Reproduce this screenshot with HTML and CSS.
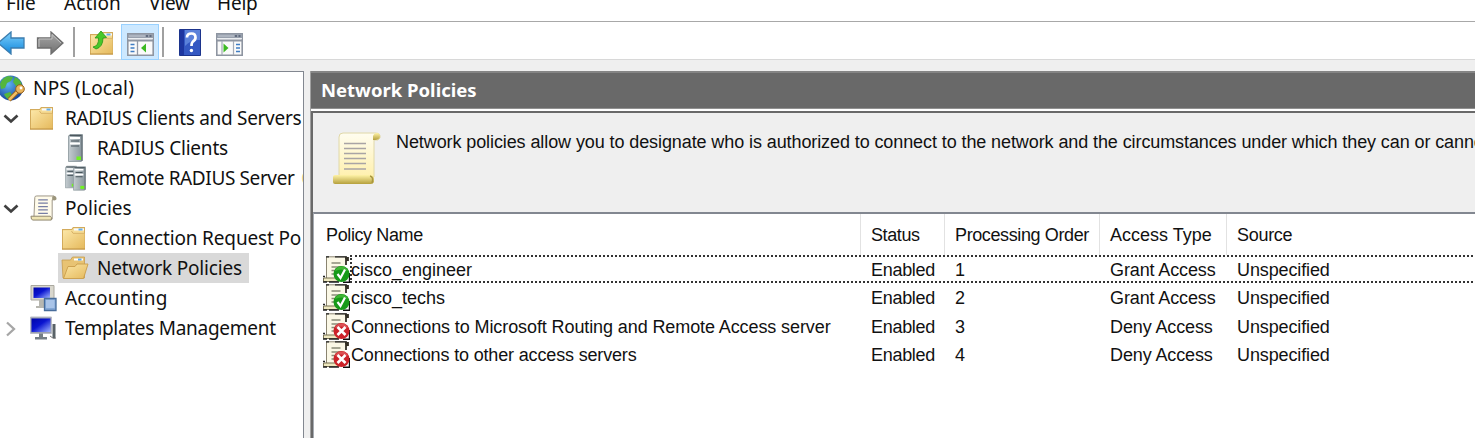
FILE: index.html
```
<!DOCTYPE html>
<html lang="en">
<head>
<meta charset="utf-8">
<title>Network Policy Server</title>
<link rel="stylesheet" href="styles.css">
</head>
<body>
<svg class="defs" width="0" height="0">
  <defs>
    <linearGradient id="gFolder" x1="0" y1="0" x2="1" y2="1"><stop offset="0" stop-color="#fbe6a6"/><stop offset="1" stop-color="#e5b95c"/></linearGradient>
    <linearGradient id="gBlue" x1="0" y1="0" x2="0" y2="1"><stop offset="0" stop-color="#7fd0fb"/><stop offset="1" stop-color="#0f86dc"/></linearGradient>
    <linearGradient id="gGrey" x1="0" y1="0" x2="0" y2="1"><stop offset="0" stop-color="#a8a8a8"/><stop offset="1" stop-color="#707070"/></linearGradient>
    <linearGradient id="gScreen" x1="0" y1="0" x2="1" y2="1"><stop offset="0" stop-color="#0005a8"/><stop offset=".45" stop-color="#0a14d0"/><stop offset="1" stop-color="#9fb4ff"/></linearGradient>
    <linearGradient id="gServer" x1="0" y1="0" x2="1" y2="0"><stop offset="0" stop-color="#c4ccd0"/><stop offset="1" stop-color="#87949b"/></linearGradient>
    <linearGradient id="gPaper" x1="0" y1="0" x2="0" y2="1"><stop offset="0" stop-color="#fffdf0"/><stop offset="1" stop-color="#fff0ae"/></linearGradient>
    <linearGradient id="gRoll" x1="0" y1="0" x2="0" y2="1"><stop offset="0" stop-color="#fff3a8"/><stop offset="1" stop-color="#b5a03c"/></linearGradient>
    <radialGradient id="gGlobe" cx=".4" cy=".35" r=".7"><stop offset="0" stop-color="#5fb4f4"/><stop offset="1" stop-color="#123f94"/></radialGradient>
    <symbol id="folder" viewBox="0 0 26 26">
      <path d="M1 4h9.500l1.500-2h12v22.500H1z" fill="#d3ab5c"/>
      <path d="M2 5h9l1.500-2H23v20.500H2z" fill="#f6dc95"/>
      <path d="M13 3.500h10v2H13z" fill="#f8fbff"/><path d="M17.500 3.500h4v2h-4z" fill="#68aee8"/>
      <path d="M2 6h8.500l1 2.500h12V24H2z" fill="url(#gFolder)"/>
      <path d="M10.500 6l1.500 2.300h11.500" fill="none" stroke="#d9b266"/>
      <path d="M1 24h23" stroke="#bf9141"/>
    </symbol>
    <symbol id="folder-open" viewBox="0 0 28 26">
      <path d="M1 5h8.500l2-3H23.500v21H2z" fill="#e8c373" stroke="#c79c4d" stroke-width=".8"/>
      <path d="M13 3.500h9v2h-9z" fill="#fff"/><path d="M17 3.500h3.500v2H17z" fill="#62a9e6"/>
      <path d="M2.500 23.500 7 11.500h7l2-2.500h11L22.500 23.500z" fill="url(#gFolder)" stroke="#c99d4b" stroke-width=".9"/>
    </symbol>
    <symbol id="server" viewBox="0 0 15 28">
      <path d="M.5 2 2 .5h12.500v26L13 27.500H.500z" fill="url(#gServer)" stroke="#89959b" stroke-width=".8"/>
      <path d="M13.800 1v26" stroke="#6c777d" stroke-width="1.200"/><path d="M1.500 1.500h12" stroke="#4c575d" stroke-width="1.300"/>
      <path d="M2 4h10M2 9.500h10" stroke="#fff" stroke-width="1.800"/><path d="M3 7h8M3 12h8" stroke="#46535a" stroke-width="1.200"/>
      <path d="M8.500 22.500h4.500v3.500H8.500z" fill="#70f320"/>
    </symbol>
    <symbol id="scroll" viewBox="0 0 28 28">
      <path d="M5 2.500Q5 1 7 1h18q2 1 1 4h-3v20H4z" fill="#fffbea" stroke="#999282"/>
      <path d="M23 5V2q0-1 2-1t2.500 2-1.500 2.500z" fill="#9b957c"/>
      <path d="M1 22h20q2 1 1 4H3q-2 0-2-4z" fill="#efe5b4" stroke="#8d836a"/>
      <path d="M8.500 5h10M8.500 8.500h10M8.500 12h10M8.500 15.500h10M8.500 19h10" stroke="#777ea4" stroke-width="1.300"/>
    </symbol>
    <symbol id="console" viewBox="0 0 27 23">
      <path d="M.8.800h25.400v21.400H.800z" fill="#fafafa" stroke="#8e95a1" stroke-width="1.600"/>
      <path d="M1 1h25v4H1z" fill="#98a0ad"/><path d="M2 3h16" stroke="#c3c9d3"/><path d="M19 3h2M22.500 3h2" stroke="#4f5a70" stroke-width="1.500"/>
      <path d="M1 5.700h25" stroke="#e9ecf0" stroke-width="1.200"/><path d="M1 7.500h25" stroke="#8e95a1" stroke-width="2"/>
    </symbol>
    <symbol id="policy" viewBox="0 0 27 27">
      <path d="M3.500 1H24q2 1 2 4l-4 2v18H4z" fill="#fbf8e6"/>
      <path d="M3.500 22V.8H23" fill="none" stroke="#8a8470"/>
      <path d="M3 .8h3M12 .8h12" stroke="#222" stroke-width="1.200"/>
      <path d="M22 2h3v2h-2v5" fill="none" stroke="#333026" stroke-width="1.800"/>
      <path d="M8.500 7h9M8.500 11h10M8.500 14.500h6M8.500 18h5" stroke="#8a8b78" stroke-width="1.300"/>
      <path d="M.5 22h15v3.500H.500z" fill="#eee8bf" stroke="#777052"/><path d="M0 20.500h2M0 26h4M6 26h10" stroke="#222" stroke-width="1.300"/>
      <path d="M20 26.200h6.500V17" fill="none" stroke="#111" stroke-width="1.400"/>
    </symbol>
    <symbol id="grant" viewBox="0 0 27 27">
      <use href="#policy" width="27" height="27"/><circle cx="18.500" cy="18" r="8" fill="#169a18"/><path d="M12 15a7 7 0 0 1 13 0q-7-3-13 0" fill="#3fb534"/>
      <path d="m14.500 18 3 4 4.500-8.500" fill="none" stroke="#fff" stroke-width="2.200"/>
    </symbol>
    <symbol id="deny" viewBox="0 0 27 27">
      <use href="#policy" width="27" height="27"/><circle cx="18.500" cy="18" r="8" fill="#cc2229"/><path d="M12 15a7 7 0 0 1 13 0q-7-3-13 0" fill="#dc5054"/>
      <path d="m14.500 14 8 8m0-8-8 8" stroke="#fff" stroke-width="2.600"/>
    </symbol>
  </defs>
</svg>
<div class="window">
  <nav class="menu"><span class="m1">File</span><span class="m2">Action</span><span class="m3">View</span><span class="m4">Help</span></nav>
  <div class="toolbar">
    <svg class="back" width="25" height="24" viewBox="0 0 25 24"><path d="M-2 12 11 1v6h13v10H11v6z" fill="url(#gBlue)" stroke="#3b7cae" stroke-width="1.300"/></svg>
    <svg class="forward" width="28" height="24" viewBox="0 0 28 24"><path d="M27 12 15 1v6H1.500v10H15v6z" fill="url(#gGrey)" stroke="#6e6e6e" stroke-width="1.300"/><path d="M25 12 16 3.500V8H3v8" fill="none" stroke="#c2c2c2"/></svg>
    <i class="sep"></i>
    <svg class="up" width="26" height="26" viewBox="0 0 26 26"><use href="#folder" width="26" height="26"/><path d="M4 17q6-1 5.500-9H6l6-7 5.500 6.500-3.500.5q0 9-7 11z" fill="#48c82a" stroke="#279517" stroke-width=".8"/></svg>
    <span class="pressed"><svg width="27" height="23" viewBox="0 0 27 23"><use href="#console" width="27" height="23"/><path d="M10.500 8v14" stroke="#9299a7" stroke-width="1.300"/><path d="M3.500 11.500h4M3.500 15h4M3.500 18.500h4" stroke="#3f7dc4" stroke-width="1.700"/><path d="M19 10.500v9L14 15z" fill="#3cba22"/></svg></span>
    <i class="sep sep2"></i>
    <svg class="help" width="22" height="27" viewBox="0 0 22 27"><path d="M.5.500h21v26H.500z" fill="#3458c2" stroke="#1c348c"/><path d="M1 1h4v25H1z" fill="#1d36a0"/><path d="M6 1h15v10Q12 10 6 17z" fill="#5b82da"/><path d="M8 8.500q0-4 4.500-4 4 0 4 4 0 2.500-2.500 4-1.500 1-1.500 4.500" fill="none" stroke="#fff" stroke-width="2.700"/><circle cx="12.400" cy="21.500" r="1.700" fill="#fff"/></svg>
    <svg class="action" width="27" height="23" viewBox="0 0 27 23"><use href="#console" width="27" height="23"/><path d="M17.500 8v14M6 8v14" stroke="#a5abb7" stroke-width="1.200"/><path d="M20 11.500h4M20 15h4M20 18.500h4" stroke="#3f7dc4" stroke-width="1.700"/><path d="M7.500 10.500v9l5-4.500z" fill="#3cba22"/></svg>
  </div>
  <main class="main">
    <aside class="tree">
      <div class="node root"><svg width="25" height="28" viewBox="0 0 25 28"><circle cx="10.500" cy="14" r="12.500" fill="url(#gGlobe)"/><path d="M0 10Q2 4 8 2l5 1-2 4-4 2-2 5-4 1zM15 3q7 3 7 10l-6-1-3-4zM4 20l6-2 3 4-3 4q-4-1-6-6" fill="#54b63e"/><path d="m9 26 9-9" stroke="#97601b" stroke-width="4.500"/><path d="m9 26 9-9" stroke="#f0bd62" stroke-width="2.500"/><circle cx="20" cy="15" r="4.300" fill="#eab55c" stroke="#97601b"/><circle cx="21" cy="14" r="1.400" fill="#fff"/></svg><span class="t1">NPS (Local)</span></div>
      <div class="node l1"><svg class="chev" width="16" height="10" viewBox="0 0 16 10"><path d="m1.500 1.500 6.500 6 6.500-6" fill="none" stroke="#404040" stroke-width="2.700"/></svg><svg class="ic folder" width="26" height="26"><use href="#folder"/></svg><span class="t2">RADIUS Clients and Servers</span></div>
      <div class="node l2"><svg class="one" width="15" height="28"><use href="#server"/></svg><span class="t3">RADIUS Clients</span></div>
      <div class="node l2"><svg class="two" width="22" height="26" viewBox="0 0 22 26"><use href="#server" width="12" height="24"/><use href="#server" x="8" y="1" width="13" height="25"/></svg><span class="t4">Remote RADIUS Server <span class="next">G</span></span></div>
      <div class="node l1"><svg class="chev" width="16" height="10" viewBox="0 0 16 10"><path d="m1.500 1.500 6.500 6 6.500-6" fill="none" stroke="#404040" stroke-width="2.700"/></svg><svg class="ic" width="27" height="27"><use href="#scroll"/></svg><span class="t5">Policies</span></div>
      <div class="node l2"><svg class="fo folder" width="26" height="26"><use href="#folder"/></svg><span class="t6">Connection Request Po</span></div>
      <div class="node l2 selected"><svg class="fo" width="28" height="26"><use href="#folder-open"/></svg><span class="t7">Network Policies</span></div>
      <div class="node l1"><i class="chev"></i><svg class="ic" width="27" height="28" viewBox="0 0 27 28"><path d="M1 1.500h23V16H1z" fill="#d9d7cd" stroke="#aaa89f"/><path d="M3.500 3.500H20V14H3.500z" fill="url(#gScreen)"/><path d="M9 16h6v4h3v4H6v-2h3z" fill="#b7b7b0"/><path d="M14.500 14.500H26V26.500H14.500z" fill="#84a8d6" stroke="#486d9b" stroke-width="1.300"/><path d="M16 16h8.500v8H16z" fill="#a9c4e8"/></svg><span class="t8">Accounting</span></div>
      <div class="node l1"><svg class="chev right" width="16" height="16" viewBox="0 0 16 16"><path d="m4 1.500 7 6.500-7 6.500" fill="none" stroke="#a6a6a6" stroke-width="2.300"/></svg><svg class="ic" width="27" height="25" viewBox="0 0 27 25"><path d="M.5 1h21v16.500H.500z" fill="#9aa0ae" stroke="#b9bcc7"/><path d="M1.500 2.500h19v13.500h-19z" fill="url(#gScreen)"/><path d="M9 17.500h4V21h4v2.500H5V21h4z" fill="#747e85"/><path d="M22.500 8h3v14h-3z" fill="#596267"/><path d="M20 20q4 4 6 2" fill="none" stroke="#777"/></svg><span class="t9">Templates Management</span></div>
    </aside>
    <section class="pane">
      <h1><span>Network Policies</span></h1>
      <div class="body">
        <div class="intro">
          <svg width="50" height="53" viewBox="0 0 50 53"><path d="M7 5q0-4 4-4h32q6 0 5 5-1 3-6 2v37H7z" fill="url(#gPaper)" stroke="#e0d8a8"/><path d="M41 8V4q1-3 4-3t3 4q-1 3-5 3z" fill="url(#gRoll)"/><path d="M1 45q0-2 2-2h36q3 0 3 3v4q-1 2-3 2H3q-2 0-2-2z" fill="url(#gRoll)"/><path d="M38 44q4 1 2 7" fill="none" stroke="#a89640" stroke-width="1.500"/><path d="M12 11.500h22M12 16.500h22M12 21.500h22M12 26.500h22M12 31.500h22M12 37h22" stroke="#a9a4a5" stroke-width="1.500"/></svg>
          <p>Network policies allow you to designate who is authorized to connect to the network and the circumstances under which they can or cannot</p>
        </div>
        <div class="list">
          <div class="row head"><span class="c-name"><b class="h1">Policy Name</b></span><span><b class="h2">Status</b></span><span><b class="h3">Processing Order</b></span><span><b class="h4">Access Type</b></span><span><b class="h5">Source</b></span></div>
          <div class="row focus"><span class="name"><svg width="27" height="27"><use href="#grant"/></svg><b class="n1">cisco_engineer</b></span><span><b class="st">Enabled</b></span><span><b>1</b></span><span><b class="ac">Grant Access</b></span><span><b class="un">Unspecified</b></span></div>
          <div class="row"><span class="name"><svg width="27" height="27"><use href="#grant"/></svg><b class="n2">cisco_techs</b></span><span><b class="st">Enabled</b></span><span><b>2</b></span><span><b class="ac">Grant Access</b></span><span><b class="un">Unspecified</b></span></div>
          <div class="row"><span class="name"><svg width="27" height="27"><use href="#deny"/></svg><b class="n3">Connections to Microsoft Routing and Remote Access server</b></span><span><b class="st">Enabled</b></span><span><b>3</b></span><span><b class="ac">Deny Access</b></span><span><b class="un">Unspecified</b></span></div>
          <div class="row"><span class="name"><svg width="27" height="27"><use href="#deny"/></svg><b class="n4">Connections to other access servers</b></span><span><b class="st">Enabled</b></span><span><b>4</b></span><span><b class="ac">Deny Access</b></span><span><b class="un">Unspecified</b></span></div>
        </div>
      </div>
    </section>
  </main>
</div>
</body>
</html>
```
FILE: styles.css
```
* { box-sizing: border-box; }
body { margin: 0; width: 1475px; height: 438px; overflow: hidden; background: #efefef; color: #111; }
svg { display: block; flex: none; }
.defs { position: absolute; }
.window { display: flex; flex-direction: column; height: 438px; white-space: nowrap; font: 19px/30px "Noto Sans", "Open Sans", sans-serif; }
.menu { display: flex; height: 22px; background: #fff; border-bottom: 1px solid #a8a8a8; overflow: hidden; line-height: 28px; padding-left: 6px; flex: none; letter-spacing: -.2px; }
.menu span { flex: none; margin-top: -11px; }
.m1 { width: 58px; } .m2 { width: 85px; letter-spacing: 0.1px; } .m3 { width: 68px; }
.toolbar { display: flex; height: 38px; background: #fff; border-bottom: 1px solid #d8d8d8; flex: none; }
.back { margin-top: 9px; }
.forward { margin: 9px 0 0 11px; }
.sep { width: 2px; height: 30px; background: #a0a0a0; margin: 5px 0 0 9px; flex: none; }
.up { margin: 8px 0 0 14px; }
.pressed { width: 38px; height: 36px; background: #cce8ff; border: 1px solid #99d1ff; margin: 2px 0 0 6px; padding: 8px 0 0 5px; }
.sep2 { margin-left: 3px; }
.help { margin: 7px 0 0 15px; }
.action { margin: 11px 0 0 15px; }
.main { display: flex; flex: 1; padding-top: 11px; min-height: 0; }
.tree { width: 304px; border-top: 1px solid #828790; border-right: 1px solid #828790; background: #fff; flex: none; overflow: hidden; padding-top: 1px; }
.node { display: flex; align-items: center; height: 30px; }
.node > span { line-height: 28px; padding-bottom: 1px; }
.root svg { margin-right: 8px; }
.l1 .chev { width: 16px; margin: 2px 11px 0 3px; flex: none; }
.l1 .ic { margin-right: 8px; }
.l1 .folder { margin: 0 10px 0 -1px; }
.l2 { padding-left: 61px; }
.l2 .fo { margin-right: 10px; }
.l2 .one { margin: 0 14px 0 7px; }
.l2 .two { margin: 0 10px 0 4px; }
.selected { width: 191px; margin-left: 58px; padding-left: 3px; background: #d9d9d9; }
.selected .fo { margin-right: 8px; }
.t1, .t8 { letter-spacing: .2px; }
.t2 { letter-spacing: -.3px; }
.t3, .t7 { letter-spacing: -.2px; }
.t4 { letter-spacing: -.38px; }
.t6 { letter-spacing: -.15px; }
.t9 { letter-spacing: -.28px; }
.next { color: #f0d08c; margin-left: 2px; }
.pane { flex: 1; margin-left: 6px; min-width: 0; display: flex; flex-direction: column; border-left: 1px solid #a0a0a0; }
h1 { margin: 0; height: 38px; flex: none; background: #696969; border-top: 2px solid #858585; border-bottom: 1px solid #909090; color: #fff; font: 700 18.500px/34px "Noto Sans", sans-serif; padding-left: 10px; }
.body { flex: 1; display: flex; flex-direction: column; margin-top: 2px; border-left: 2px solid #696969; border-top: 2px solid #696969; background: #efefef; box-shadow: 0 -2px #fff; }
.intro { display: flex; height: 99px; padding: 19px 0 0 19px; flex: none; overflow: hidden; }
.intro p { margin: -1px 0 0 14px; font: 18px/22px "Liberation Sans", Arial, sans-serif; letter-spacing: -.095px; }
.list { flex: 1; background: #fff; border-top: 2px solid #828790; border-left: 1px solid #a7acb3; font: 18px/28px "Liberation Sans", Arial, sans-serif; }
.row { display: grid; grid-template-columns: 546px 84px 155px 127px 1fr; height: 28.300px; }
.row > span { padding-left: 11px; display: flex; align-items: center; }
.row b { font-weight: 400; padding-top: 1px; }
.head { height: 41px; }
.head > span { border-left: 1px solid #e2e2e2; padding-left: 10px; }
.head b { padding-top: 0; }
.head > .c-name { border-left: 0; padding-left: 12px; }
.row .name { padding-left: 9px; gap: 1px; }
.h1, .h3 { letter-spacing: -.38px; }
.h2 { letter-spacing: -.4px; }
.h5, .st { letter-spacing: -.3px; }
.n3 { letter-spacing: -.1px; }
.n4 { letter-spacing: -.16px; }
.ac, .un { letter-spacing: -.12px; }
.focus { position: relative; }
.focus::after { content: ""; position: absolute; inset: 0 -10px 0 36px; border: 2px dotted #333; }
```
